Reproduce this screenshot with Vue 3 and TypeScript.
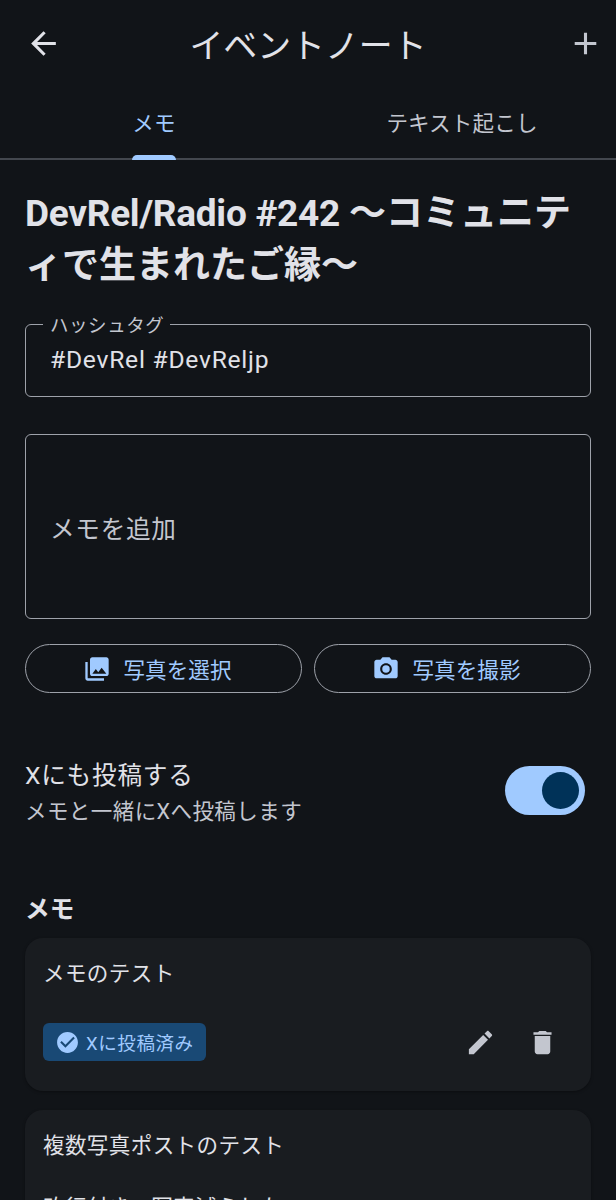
<script setup lang="ts">
import { ref } from 'vue'

interface Memo {
  lines: string[]
  posted: boolean
}

const tabs = ['メモ', 'テキスト起こし']
const activeTab = ref(0)
const postToX = ref(true)
const memos: Memo[] = [
  { lines: ['メモのテスト'], posted: true },
  { lines: ['複数写真ポストのテスト', '', '改行付き、写真減らした'], posted: true },
]
</script>

<template>
  <main class="screen">
    <header class="bar">
      <button class="icon-btn" aria-label="戻る">
        <svg class="back" viewBox="0 0 24 24"><path d="M20 11H7.83l5.59-5.59L12 4l-8 8 8 8 1.41-1.41L7.83 13H20z" /></svg>
      </button>
      <h1 class="title">イベントノート</h1>
      <button class="icon-btn" aria-label="追加">
        <svg class="add" viewBox="0 0 24 24"><path d="M19 13h-6v6h-2v-6H5v-2h6V5h2v6h6z" /></svg>
      </button>
    </header>

    <nav class="tabs">
      <button
        v-for="(tab, i) in tabs"
        :key="tab"
        class="tab"
        :class="{ active: i === activeTab }"
        @click="activeTab = i"
      >
        <span class="tab-label">{{ tab }}</span>
      </button>
    </nav>

    <section class="content">
      <h2 class="headline"><span class="latin">DevRel/Radio #242 </span>〜コミュニティで生まれたご縁〜</h2>

      <fieldset class="field">
        <legend>ハッシュタグ</legend>
        <div class="value">#DevRel #DevReljp</div>
      </fieldset>

      <div class="memo-box"><span>メモを追加</span></div>

      <div class="actions">
        <button class="outlined">
          <svg viewBox="0 0 24 24"><path d="M22 16V4c0-1.100-.9-2-2-2H8c-1.100 0-2 .9-2 2v12c0 1.100.9 2 2 2h12c1.100 0 2-.9 2-2zm-11-4 2.030 2.710L16 11l4 5H8l3-4zM2 6v14c0 1.100.9 2 2 2h14v-2H4V6H2z" /></svg>
          <span>写真を選択</span>
        </button>
        <button class="outlined">
          <svg viewBox="0 0 24 24">
            <circle cx="12" cy="12" r="3.200" />
            <path d="M9 2 7.170 4H4c-1.100 0-2 .9-2 2v12c0 1.100.9 2 2 2h16c1.100 0 2-.9 2-2V6c0-1.100-.9-2-2-2h-3.170L15 2H9zm3 15c-2.760 0-5-2.240-5-5s2.240-5 5-5 5 2.240 5 5-2.240 5-5 5z" />
          </svg>
          <span>写真を撮影</span>
        </button>
      </div>

      <div class="setting">
        <div>
          <div class="setting-title">Xにも投稿する</div>
          <div class="setting-sub">メモと一緒にXへ投稿します</div>
        </div>
        <button class="switch" :class="{ on: postToX }" aria-label="Xにも投稿する" @click="postToX = !postToX">
          <span class="thumb"></span>
        </button>
      </div>

      <h3 class="list-title">メモ</h3>
      <article v-for="(memo, i) in memos" :key="i" class="card">
        <p v-for="(line, n) in memo.lines" :key="n" class="line">{{ line }}</p>
        <div class="card-foot">
          <span v-if="memo.posted" class="badge">
            <svg viewBox="0 0 24 24"><path d="M12 2C6.480 2 2 6.480 2 12s4.480 10 10 10 10-4.480 10-10S17.520 2 12 2zm-2 15-5-5 1.410-1.410L10 14.170l7.590-7.590L19 8l-9 9z" /></svg>
            <span>Xに投稿済み</span>
          </span>
          <div class="tools">
            <button class="tool" aria-label="編集">
              <svg viewBox="0 0 24 24"><path d="M3 17.250V21h3.750L17.810 9.940l-3.750-3.750L3 17.250zM20.710 7.040c.39-.39.39-1.020 0-1.410l-2.340-2.340c-.39-.39-1.020-.39-1.410 0l-1.830 1.830 3.750 3.750 1.830-1.830z" /></svg>
            </button>
            <button class="tool" aria-label="削除">
              <svg viewBox="0 0 24 24"><path d="M6 19c0 1.100.9 2 2 2h8c1.100 0 2-.9 2-2V7H6v12zM19 4h-3.500l-1-1h-5l-1 1H5v2h14V4z" /></svg>
            </button>
          </div>
        </div>
      </article>
    </section>
  </main>
</template>

<style>
body {
  background: #111418;
}
</style>

<style scoped>
.screen {
  box-sizing: border-box;
  width: 616px;
  height: 1200px;
  overflow: hidden;
  background: #111418;
  color: #e1e2e8;
  font-family: Roboto, "Noto Sans CJK JP", sans-serif;
}
.screen * {
  box-sizing: border-box;
}
button {
  padding: 0;
  border: 0;
  background: none;
  color: inherit;
  font: inherit;
}
svg {
  display: block;
  fill: currentColor;
}
h1, h2, h3, p {
  margin: 0;
}
.bar {
  display: grid;
  grid-template-columns: 37px 1fr 37px;
  align-items: center;
  height: 86px;
  padding: 0 12px 0 25px;
}
.icon-btn svg {
  width: 37px;
  height: 37px;
}
.icon-btn .add {
  color: #c3c6cf;
}
.title {
  padding: 7px 13px 0 0;
  text-align: center;
  font-size: 33.9px;
  font-weight: 400;
  line-height: 44px;
}
.tabs {
  display: flex;
  height: 74px;
  border-bottom: 2px solid #43474e;
}
.tab {
  display: flex;
  flex: 1;
  justify-content: center;
  height: 74px;
  color: #c3c6cf;
  font-size: 21.56px;
  letter-spacing: 0.15px;
}
.tab-label {
  height: 74px;
  line-height: 76px;
}
.tab.active {
  color: #a0caff;
}
.tab.active .tab-label::after {
  content: "";
  display: block;
  height: 5px;
  margin-top: -7px;
  border-radius: 5px 5px 0 0;
  background: #a0caff;
}
.content {
  padding: 28px 25px 0;
}
.headline {
  height: 104px;
  font-size: 37px;
  font-weight: 700;
  line-height: 52px;
}
.latin {
  letter-spacing: -0.27px;
}
.field {
  height: 84px;
  margin: 21px 0 0;
  padding: 0 24px;
  border: 1px solid #9ea2aa;
  border-radius: 6px;
}
.field legend {
  height: 22px;
  margin-left: -7px;
  padding: 2px 6px 0 7px;
  color: #c3c6cf;
  font-size: 18.5px;
  line-height: 22px;
  letter-spacing: 0.55px;
}
.value {
  margin-top: 7px;
  font-size: 24.64px;
  line-height: 36px;
  letter-spacing: 0.75px;
}
.memo-box {
  display: flex;
  align-items: center;
  height: 185px;
  margin-top: 37px;
  padding-left: 24px;
  border: 1px solid #9ea2aa;
  border-radius: 6px;
  color: #c3c6cf;
  font-size: 24.64px;
  letter-spacing: 0.7px;
}
.actions {
  display: grid;
  grid-template-columns: 1fr 1fr;
  gap: 12px;
  margin-top: 25px;
}
.outlined {
  display: flex;
  align-items: center;
  justify-content: center;
  gap: 12px;
  height: 49px;
  padding-right: 12px;
  border: 1px solid #9ea2aa;
  border-radius: 25px;
  color: #a0caff;
  font-size: 21.56px;
  letter-spacing: 0.1px;
}
.outlined svg {
  width: 28px;
  height: 28px;
}
.setting {
  display: flex;
  align-items: center;
  justify-content: space-between;
  height: 74px;
  margin-top: 63px;
  padding-right: 6px;
}
.setting-title {
  font-size: 24.64px;
  line-height: 37px;
  letter-spacing: 0.77px;
}
.setting-sub {
  color: #c3c6cf;
  font-size: 21.56px;
  line-height: 36px;
  letter-spacing: 0.385px;
}
.switch {
  display: flex;
  align-items: center;
  width: 80px;
  height: 49px;
  margin-bottom: 5px;
  padding: 0 6px;
  border-radius: 25px;
  background: #32353a;
}
.switch.on {
  justify-content: flex-end;
  background: #a0caff;
}
.thumb {
  width: 37px;
  height: 37px;
  border-radius: 50%;
  background: #003258;
}
.list-title {
  margin-top: 62px;
  height: 46px;
  font-size: 24.64px;
  font-weight: 700;
  line-height: 36px;
  letter-spacing: 0.23px;
}
.card {
  margin-bottom: 19px;
  padding: 20px 18px 18px;
  border-radius: 18px;
  background: #191c20;
  box-shadow: 0 1px 3px rgba(0, 0, 0, 0.35);
}
.line {
  height: 31px;
  font-size: 21.56px;
  line-height: 31px;
  letter-spacing: 0.385px;
}
.card-foot {
  display: flex;
  align-items: center;
  justify-content: space-between;
  height: 62px;
  margin-top: 22px;
}
.badge {
  display: flex;
  align-items: center;
  gap: 6px;
  height: 38px;
  padding: 0 12px;
  border-radius: 6px;
  background: #194975;
  color: #a0caff;
  font-size: 18.5px;
  letter-spacing: 0.6px;
}
.badge svg {
  width: 25px;
  height: 25px;
}
.tools {
  display: flex;
  color: #c3c6cf;
}
.tool {
  display: flex;
  align-items: center;
  justify-content: center;
  width: 62px;
  height: 62px;
}
.tool svg {
  width: 31px;
  height: 31px;
}
</style>
